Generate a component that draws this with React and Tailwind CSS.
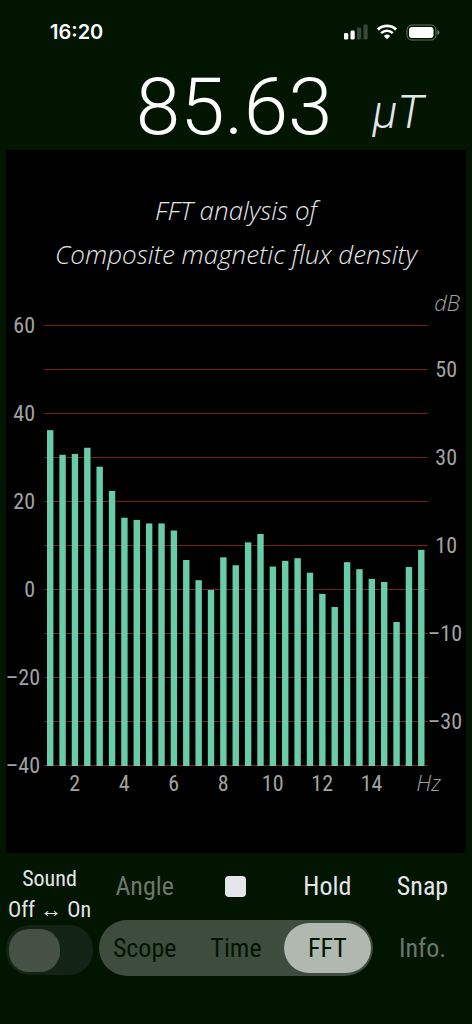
import { useState } from "react";

const START_HZ = 1;
const STEP_HZ = 0.5;

const levels = [
  36.1, 30.5, 30.7, 32.1, 27.8, 22.3, 16.2, 15.7, 14.9, 14.9, 13.3, 6.6, 2,
  -0.2, 7.2, 5.4, 10.6, 12.5, 5.1, 6.4, 7, 3.7, -1.1, -4.1, 6.1, 4.5, 2.3, 1.6,
  -7.5, 5, 8.9,
];

const gridLevels = [60, 50, 40, 30, 20, 10, 0, -10, -20, -30, -40];
const leftTicks = [60, 40, 20, 0, -20, -40];
const rightTicks = [50, 30, 10, -10, -30];
const hzTicks = [2, 4, 6, 8, 10, 12, 14];

const modes = ["Scope", "Time", "FFT"];

// chart units: 4.4 per dB, 24.74 per Hz
const yOf = (db) => 49 + (60 - db) * 4.4;
const xOf = (hz) => 44 + (hz - START_HZ) * 24.74;
const tickText = (n) => (n < 0 ? `–${Math.abs(n)}` : `${n}`);

const StatusBar = () => (
  <div className="flex items-center justify-between pl-[50px] pr-8 pt-4">
    <span className="font-['Inter',sans-serif] text-xl leading-8 font-semibold text-white">
      16:20
    </span>

    <div className="flex items-center gap-2">
      <svg width="25" height="16" viewBox="0 0 25 16" fill="#fff">
        <rect x="1" y="9" width="4.2" height="6.5" rx="1.3" />
        <rect x="7.5" y="6.5" width="4.2" height="9" rx="1.3" />
        <rect x="14" y="3.5" width="4.2" height="12" rx="1.3" opacity=".22" />
        <rect x="20.5" y="0.5" width="4.2" height="15" rx="1.3" opacity=".22" />
      </svg>

      <svg width="22" height="16" viewBox="0 0 22 16" fill="none">
        <path
          d="M1.9 5.6a13 13 0 0 1 18.2 0"
          stroke="#fff"
          strokeWidth="2.9"
        />
        <path
          d="M5.2 9.1a8.3 8.3 0 0 1 11.6 0"
          stroke="#fff"
          strokeWidth="2.6"
        />
        <path d="M7.8 12a4.9 4.9 0 0 1 6.4 0L11 15.3z" fill="#fff" />
      </svg>

      <svg width="34" height="17" viewBox="0 0 34 17" fill="none">
        <rect
          x="1"
          y="1"
          width="29"
          height="15"
          rx="4.8"
          stroke="#fff"
          strokeOpacity=".4"
        />
        <rect x="3" y="3" width="24.5" height="11" rx="3" fill="#fff" />
        <path
          d="M31.5 6v5c1.2-.5 1.8-1.4 1.8-2.5S32.7 6.5 31.5 6z"
          fill="#fff"
          fillOpacity=".5"
        />
      </svg>
    </div>
  </div>
);

const FftChart = () => (
  <svg
    viewBox="0 0 460 577"
    className="block w-full text-[22px]"
    fill="#a3a3a3"
    role="img"
    aria-label="FFT spectrum"
  >
    {gridLevels.map((db) => (
      <rect
        key={db}
        x="38"
        width="384"
        y={yOf(db)}
        height="1"
        fill="#781d1a"
      />
    ))}

    {levels.map((db, i) => (
      <rect
        key={i}
        x={xOf(START_HZ + i * STEP_HZ) - 3}
        y={yOf(db)}
        width="6.4"
        height={yOf(-40) - yOf(db) + 1}
        fill="#6bd3ae"
        fillOpacity=".97"
      />
    ))}

    {leftTicks.map((db) => (
      <text key={db} x={db < 0 ? 34 : 29} y={yOf(db) + 8} textAnchor="end">
        {tickText(db)}
      </text>
    ))}

    {rightTicks.map((db) => (
      <text key={db} x={db < 0 ? 456 : 451} y={yOf(db) + 8} textAnchor="end">
        {tickText(db)}
      </text>
    ))}

    {hzTicks.map((hz) => (
      <text key={hz} x={xOf(hz)} y="515" textAnchor="middle">
        {hz}
      </text>
    ))}

    <g className="font-['Open_Sans',sans-serif] font-light italic">
      <text x="454" y="35" textAnchor="end">
        dB
      </text>
      <text x="435" y="515" textAnchor="end">
        Hz
      </text>
    </g>
  </svg>
);

const App = () => {
  const [mode, setMode] = useState("FFT");
  const [sound, setSound] = useState(false);

  return (
    <div className="min-h-screen bg-[#011501] font-['Roboto_Condensed','Roboto',sans-serif]">
      <StatusBar />

      <div className="flex items-end justify-end gap-10 pr-12 pt-4 text-white">
        <span className="font-['Roboto',sans-serif] text-[80px] leading-[86px] font-light">
          85.63
        </span>
        <span className="font-['Roboto',sans-serif] text-[46px] leading-[76px] font-light text-[#e5e5ea] italic">
          µT
        </span>
      </div>

      <main className="mx-1.5 bg-black pt-[38px]">
        <h1 className="text-center font-['Open_Sans',sans-serif] text-[26px] leading-[44px] font-light text-[#e5e5ea] italic">
          FFT analysis of
          <br />
          Composite magnetic flux density
        </h1>

        <FftChart />
      </main>

      <div className="grid grid-cols-[87px_1fr_87px] items-center gap-x-1.5 px-1.5 text-[26px] text-[#e5e5ea]">
        <div className="row-span-2 self-start pt-2.5">
          <label
            htmlFor="sound"
            className="block text-center text-[22px] leading-[31px] whitespace-nowrap"
          >
            Sound
            <br />
            Off ↔ On
          </label>

          <div className="relative flex h-[50px] items-center rounded-3xl bg-[#132315] px-[3px]">
            <input
              id="sound"
              type="checkbox"
              role="switch"
              checked={sound}
              onChange={(e) => setSound(e.target.checked)}
              className="peer absolute inset-0 size-full cursor-pointer appearance-none"
            />
            <span className="h-[43px] w-[51px] rounded-[20px] bg-[#445144] peer-checked:ml-auto" />
          </div>
        </div>

        <div className="grid h-[67px] grid-cols-3 items-center">
          <button className="text-[#6b776b]">Angle</button>
          <button
            aria-label="Stop"
            className="mx-auto size-[21px] rounded bg-[#e5e5ea]"
          />
          <button>Hold</button>
        </div>

        <button>Snap</button>

        <fieldset
          aria-label="Display mode"
          className="grid h-14 grid-cols-3 items-center rounded-full bg-[#3e4c3e] text-[#011501]"
        >
          {modes.map((m) => (
            <label
              key={m}
              className="mx-0.5 flex h-[50px] cursor-pointer items-center justify-center rounded-full has-checked:bg-[#b0b8b0]"
            >
              <input
                type="radio"
                name="mode"
                checked={mode === m}
                onChange={() => setMode(m)}
                className="sr-only"
              />
              {m}
            </label>
          ))}
        </fieldset>

        <button className="text-[#6b776b]">Info.</button>
      </div>
    </div>
  );
};

export default App;
